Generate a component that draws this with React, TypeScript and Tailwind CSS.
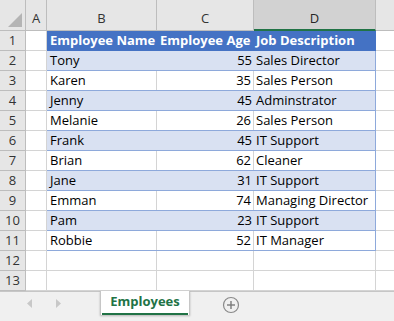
import React from "react";

const rows: [string, string, string][] = [
  ["Tony", "55", "Sales Director"],
  ["Karen", "35", "Sales Person"],
  ["Jenny", "45", "Adminstrator"],
  ["Melanie", "26", "Sales Person"],
  ["Frank", "45", "IT Support"],
  ["Brian", "62", "Cleaner"],
  ["Jane", "31", "IT Support"],
  ["Emman", "74", "Managing Director"],
  ["Pam", "23", "IT Support"],
  ["Robbie", "52", "IT Manager"],
];

const font = { fontFamily: '"Open Sans", "Liberation Sans", sans-serif' };

function RowHead({ n }: { n: number }) {
  return (
    <div className="w-[26px] h-[20px] shrink-0 bg-[#e6e6e6] border-r border-b border-[#bdbdbd] flex items-center justify-center text-[13px] text-[#333]">
      {n}
    </div>
  );
}

export default function App() {
  return (
    <div className="w-[394px] h-[321px] bg-white overflow-hidden flex flex-col text-black" style={font}>
      {/* column headers */}
      <div className="flex h-[31px] shrink-0 bg-[#e6e6e6]">
        <div className="w-[26px] shrink-0 border-r border-b border-[#bdbdbd] relative">
          <svg className="absolute right-[3px] bottom-[3px]" width="14" height="14" viewBox="0 0 14 14">
            <polygon points="14,0 14,14 0,14" fill="#b4b4b4" />
          </svg>
        </div>
        <div className="w-[21px] shrink-0 border-r border-b border-[#bdbdbd] flex items-end justify-center pb-[2px] text-[13px] text-[#333]">A</div>
        <div className="w-[110px] shrink-0 border-r border-b border-[#bdbdbd] flex items-end justify-center pb-[2px] text-[13px] text-[#333]">B</div>
        <div className="w-[97px] shrink-0 border-r border-b border-[#bdbdbd] flex items-end justify-center pb-[2px] text-[13px] text-[#333]">C</div>
        <div className="w-[122px] shrink-0 h-[31px] bg-[#d2d2d2] border-r border-[#bdbdbd] border-b-2 border-b-[#217346] flex items-end justify-center pb-[1px] text-[13px] text-[#262626]">D</div>
        <div className="flex-1 border-b border-[#bdbdbd]" />
      </div>

      {/* row 1 header */}
      <div className="flex h-[20px] shrink-0">
        <RowHead n={1} />
        <div className="w-[21px] shrink-0 border-r border-b border-[#d4d4d4]" />
        <div className="w-[329px] shrink-0 bg-[#4472c4] flex border-b border-[#4472c4] text-white font-bold text-[13px]">
          <div className="w-[110px] pl-[3px] flex items-center whitespace-nowrap">Employee Name</div>
          <div className="w-[97px] pl-[3px] flex items-center whitespace-nowrap">Employee Age</div>
          <div className="w-[122px] pl-[2px] flex items-center whitespace-nowrap">Job Description</div>
        </div>
        <div className="flex-1 border-b border-[#d4d4d4]" />
      </div>

      {rows.map((r, i) => {
        const band = i % 2 === 0;
        return (
          <div key={i} className="flex h-[20px] shrink-0">
            <RowHead n={i + 2} />
            <div className="w-[21px] shrink-0 border-r border-b border-[#d4d4d4]" />
            <div
              className={
                "w-[329px] shrink-0 flex border-b border-[#8ea9db] text-[13px] " +
                (band ? "bg-[#d9e1f2]" : "bg-white")
              }
            >
              <div className={"w-[110px] pl-[3px] flex items-center whitespace-nowrap " + (band ? "" : "border-r border-[#d4d4d4]")}>{r[0]}</div>
              <div className={"w-[97px] pr-[2px] flex items-center justify-end whitespace-nowrap " + (band ? "" : "border-r border-[#d4d4d4]")}>{r[1]}</div>
              <div className="w-[121px] pl-[2px] flex items-center whitespace-nowrap">{r[2]}</div>
              <div className="w-[1px] bg-[#8ea9db]" />
            </div>
            <div className="flex-1 border-b border-[#d4d4d4]" />
          </div>
        );
      })}

      {[12, 13].map((n) => (
        <div key={n} className="flex h-[20px] shrink-0">
          <RowHead n={n} />
          <div className="w-[21px] shrink-0 border-r border-b border-[#d4d4d4]" />
          <div className="w-[110px] shrink-0 border-r border-b border-[#d4d4d4]" />
          <div className="w-[97px] shrink-0 border-r border-b border-[#d4d4d4]" />
          <div className="w-[122px] shrink-0 border-r border-b border-[#d4d4d4]" />
          <div className="flex-1 border-b border-[#d4d4d4]" />
        </div>
      ))}

      {/* tab bar */}
      <div className="flex-1 bg-[#f0f0f0] border-t border-[#c6c6c6] flex items-start">
        <div className="w-[100px] h-[22px] flex items-center">
          <svg className="ml-[27px]" width="6" height="9" viewBox="0 0 6 9">
            <polygon points="5,0 5,9 0,4.5" fill="#c8c8c8" />
          </svg>
          <svg className="ml-[22px]" width="6" height="9" viewBox="0 0 6 9">
            <polygon points="1,0 1,9 6,4.5" fill="#c8c8c8" />
          </svg>
        </div>
        <div className="w-[90px] h-[24px] -mt-[1px] bg-white border-x border-[#c6c6c6] shadow-[0_1px_2px_rgba(0,0,0,0.25)] flex flex-col">
          <div className="flex-1 flex items-center justify-center text-[13px] font-bold text-[#217346]">Employees</div>
          <div className="h-[2px] mx-[1px] bg-[#217346]" />
        </div>
        <div className="ml-[32px] mt-[4px]">
          <svg width="18" height="18" viewBox="0 0 18 18">
            <circle cx="9" cy="9" r="7.5" fill="none" stroke="#8a8a8a" strokeWidth="1.2" />
            <line x1="9" y1="5" x2="9" y2="13" stroke="#7a7a7a" strokeWidth="1.4" />
            <line x1="5" y1="9" x2="13" y2="9" stroke="#7a7a7a" strokeWidth="1.4" />
          </svg>
        </div>
      </div>
    </div>
  );
}
